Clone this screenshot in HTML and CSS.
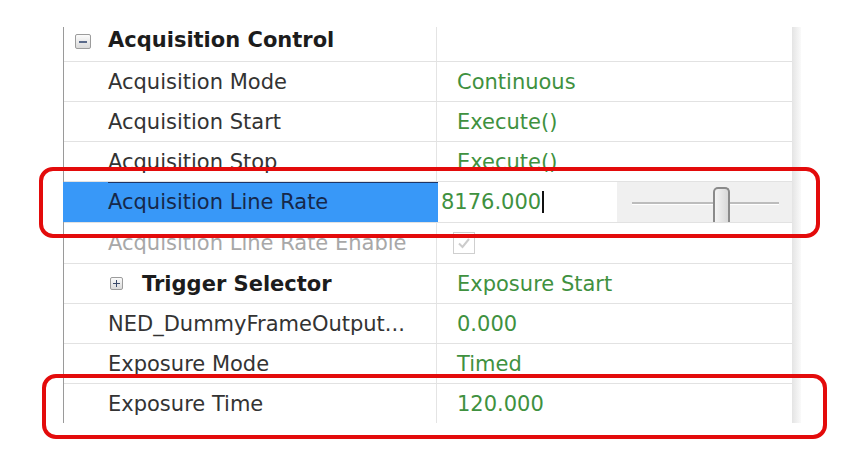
FILE: index.html
```html
<!DOCTYPE html>
<html>
<head>
<meta charset="utf-8">
<link rel="stylesheet" href="styles.css">
</head>
<body>
<div class="page">
  <div class="grid">
    <div class="row header">
      <div class="name">
        <span class="toggle minus"></span>
        <span class="bold">Acquisition Control</span>
      </div>
      <div class="value"></div>
    </div>
    <div class="row">
      <div class="name"><span class="label">Acquisition Mode</span></div>
      <div class="value"><span class="val">Continuous</span></div>
    </div>
    <div class="row">
      <div class="name"><span class="label">Acquisition Start</span></div>
      <div class="value"><span class="val">Execute()</span></div>
    </div>
    <div class="row">
      <div class="name"><span class="label">Acquisition Stop</span></div>
      <div class="value"><span class="val">Execute()</span></div>
    </div>
    <div class="row selected tall">
      <div class="name"><span class="label">Acquisition Line Rate</span></div>
      <div class="value editor">
        <div class="input"><span class="val">8176.000</span><span class="caret"></span></div>
        <div class="slider">
          <div class="track"></div>
          <div class="thumb"></div>
        </div>
      </div>
    </div>
    <div class="row tall">
      <div class="name"><span class="label disabled">Acquisition Line Rate Enable</span></div>
      <div class="value"><span class="check">
        <svg width="20" height="20" viewBox="0 0 20 20"><path d="M5 10.5 L8.5 14 L15 6" fill="none" stroke="#cccccc" stroke-width="2"/></svg>
      </span></div>
    </div>
    <div class="row">
      <div class="name sub">
        <span class="toggle plus"></span>
        <span class="bold">Trigger Selector</span>
      </div>
      <div class="value"><span class="val">Exposure Start</span></div>
    </div>
    <div class="row">
      <div class="name"><span class="label">NED_DummyFrameOutput...</span></div>
      <div class="value"><span class="val">0.000</span></div>
    </div>
    <div class="row">
      <div class="name"><span class="label">Exposure Mode</span></div>
      <div class="value"><span class="val">Timed</span></div>
    </div>
    <div class="row">
      <div class="name"><span class="label">Exposure Time</span></div>
      <div class="value"><span class="val">120.000</span></div>
    </div>
  </div>
  <div class="band"></div>
</div>
<div class="mark mark-one"></div>
<div class="mark mark-two"></div>
</body>
</html>
```
FILE: styles.css
```css
html, body {
  margin: 0;
  padding: 0;
  background: #ffffff;
  width: 860px;
  height: 474px;
  overflow: hidden;
  position: relative;
  font-family: "DejaVu Sans", Verdana, sans-serif;
  font-size: 21px;
}

.page {
  display: flex;
  padding-top: 27px;
  padding-left: 63px;
}

.grid {
  width: 728px;
  border-left: 1px solid #9a9a9a;
}

.band {
  width: 9px;
  height: 396px;
  background: linear-gradient(to right, #e4e4e4, #f1f1f1 60%, #fafafa);
}

.row {
  display: flex;
  height: 40px;
  box-sizing: border-box;
  border-top: 1px solid #e2e2e2;
}

.row.header {
  height: 34px;
  border-top: none;
}

.row.tall {
  height: 41px;
}

.name {
  width: 373px;
  box-sizing: border-box;
  border-right: 1px solid #e4e4e4;
  display: flex;
  align-items: center;
  padding-left: 44px;
  white-space: nowrap;
  overflow: hidden;
}

.header .name {
  padding-left: 11px;
  gap: 17px;
  align-items: flex-start;
  padding-top: 1px;
}

.name.sub {
  padding-left: 46px;
  gap: 19px;
}

.value {
  flex: 1;
  display: flex;
  align-items: center;
  padding-left: 20px;
}

.label {
  color: #333333;
}

.label.disabled {
  color: #a8a8a8;
}

.bold {
  font-weight: bold;
  color: #1c1c1c;
}

.val {
  color: #3f913f;
}

.toggle {
  display: inline-block;
  box-sizing: border-box;
  border: 1px solid #9c9c9c;
  border-radius: 2px;
  background: linear-gradient(#fbfbfb, #dadada);
  position: relative;
  flex: none;
}

.toggle.minus {
  width: 16px;
  height: 15px;
  margin-top: 6px;
}

.toggle.plus {
  width: 13px;
  height: 13px;
}

.toggle.minus::before {
  content: "";
  position: absolute;
  left: 3px;
  right: 3px;
  top: 6px;
  height: 2px;
  background: #5a6a8a;
}

.toggle.plus::before {
  content: "";
  position: absolute;
  left: 2px;
  right: 2px;
  top: 5px;
  height: 1px;
  background: #3a4a6a;
}

.toggle.plus::after {
  content: "";
  position: absolute;
  top: 2px;
  bottom: 2px;
  left: 5px;
  width: 1px;
  background: #3a4a6a;
}

.selected .name {
  background: #3898f8;
  position: relative;
  border-right: none;
  margin-left: -1px;
  width: 375px;
  padding-left: 45px;
}

.selected .name::before {
  content: "";
  position: absolute;
  top: 0;
  left: 45px;
  right: 0;
  height: 1px;
  background: #1d3566;
}

.selected .label {
  color: #16284a;
}

.editor {
  padding-left: 0;
  align-items: stretch;
}

.input {
  width: 179px;
  display: flex;
  align-items: center;
  padding-left: 3px;
  box-sizing: border-box;
}

.caret {
  display: inline-block;
  width: 2px;
  height: 22px;
  background: #111;
  margin-left: 1px;
}

.slider {
  flex: 1;
  background: #f0f0f0;
  position: relative;
}

.track {
  position: absolute;
  left: 15px;
  right: 13px;
  top: 20px;
  height: 2px;
  background: #bcbcbc;
  border-bottom: 1px solid #ffffff;
}

.thumb {
  position: absolute;
  left: 96px;
  top: 5px;
  bottom: 0;
  width: 17px;
  box-sizing: border-box;
  border: 2px solid #8a8a8a;
  border-bottom: none;
  border-radius: 5px 5px 0 0;
  background: linear-gradient(to right, #f4f4f4, #d8d8d8);
}

.check {
  width: 22px;
  height: 22px;
  box-sizing: border-box;
  border: 1px solid #cfcfcf;
  display: flex;
  align-items: center;
  justify-content: center;
  margin-left: -4px;
}

.mark {
  position: absolute;
  box-sizing: border-box;
  border: 4px solid #e30b0b;
  border-radius: 14px;
}

.mark-one {
  left: 39px;
  top: 167px;
  width: 781px;
  height: 71px;
}

.mark-two {
  left: 42px;
  top: 374px;
  width: 785px;
  height: 65px;
}
```
